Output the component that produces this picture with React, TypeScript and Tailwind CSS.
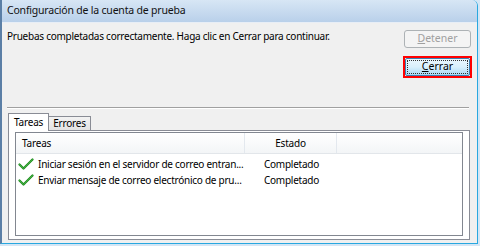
import React from "react";

function Check() {
  return (
    <svg width="16" height="12" viewBox="0 0 16 12" className="shrink-0">
      <path d="M1.5 6.5 L5.5 10.5 L14.5 1.5" fill="none" stroke="#1f8a1f" strokeWidth="2.2" strokeLinecap="round" strokeLinejoin="round" />
      <path d="M1.5 6.5 L5.5 10.5 L14.5 1.5" fill="none" stroke="#48be48" strokeWidth="0.8" strokeLinecap="round" strokeLinejoin="round" />
    </svg>
  );
}

export default function App() {
  const rows = [
    "Iniciar sesión en el servidor de correo entran...",
    "Enviar mensaje de correo electrónico de pru...",
  ];
  return (
    <div className="w-[480px] h-[246px] overflow-hidden bg-[#d4e6f5] font-['Noto_Sans',sans-serif] text-black">
      <div className="h-[244px] w-[478px] flex flex-col border-l-2 border-l-[#5b7fa6] border-r border-r-[#29a8e0] border-b border-b-[#29a8e0] rounded-tr-[6px] overflow-hidden">
        <div className="h-[23px] shrink-0 flex items-center pl-[5px] bg-gradient-to-b from-[#d7e6f5] to-[#b9d0ea] border-b border-b-[#e8eef6] text-[10.5px] tracking-[-0.2px] text-[#111]">
          Configuración de la cuenta de prueba
        </div>
        <div className="flex-1 flex flex-col bg-[#f0f0f0]">
          <div className="h-[84px] shrink-0 flex justify-between pl-[5px] pr-[5px] pt-[6px]">
            <div className="text-[10px] tracking-[-0.25px] leading-[14px]">
              Pruebas completadas correctamente. Haga clic en Cerrar para continuar.
            </div>
            <div className="flex flex-col items-center gap-[8px] pt-[1px]">
              <div className="w-[67px] h-[18px] rounded-[3px] border border-[#adb2b5] bg-[#f4f4f4] flex items-center justify-center text-[10.5px] text-[#a0a0a0]">
                <span><span className="underline">D</span>etener</span>
              </div>
              <div className="w-[69px] h-[22px] border-2 border-[#ff0000] flex">
                <div className="flex-1 rounded-[2px] border border-[#3c7fb1] bg-gradient-to-b from-[#eaf6fd] via-[#d9f0fc] to-[#a7d9f5] p-[1px] flex">
                  <div className="flex-1 border border-dotted border-[#333] flex items-center justify-center text-[10.5px]">
                    <span><span className="underline">C</span>errar</span>
                  </div>
                </div>
              </div>
            </div>
          </div>
          <div className="ml-[5px] h-[2px] shrink-0 border-t border-t-[#a0a0a0] border-b border-b-white mr-[8px]" />
          <div className="flex-1 flex flex-col pl-[6px] pr-[7px] pt-[4px] pb-[3px]">
            <div className="flex items-end h-[18px] relative z-10">
              <div className="h-[18px] px-[5px] bg-white border border-[#898c95] border-b-0 text-[10px] tracking-[-0.2px] flex items-center">Tareas</div>
              <div className="h-[15px] px-[4px] bg-gradient-to-b from-[#f2f2f2] to-[#e3e3e3] border border-[#898c95] border-l-0 text-[10px] tracking-[-0.2px] flex items-center">Errores</div>
            </div>
            <div className="flex-1 border border-[#898c95] bg-white -mt-[1px] pt-[1px] px-[6px] pb-[3px] flex">
              <div className="flex-1 border border-[#828790] bg-white flex flex-col">
                <div className="h-[21px] shrink-0 flex text-[10px] tracking-[-0.2px] bg-gradient-to-b from-white to-[#f3f5f7] border-b border-b-[#e2e6ea]">
                  <div className="w-[229px] pl-[6px] flex items-center border-r border-r-[#e3e8ee]">Tareas</div>
                  <div className="w-[92px] flex items-center justify-center border-r border-r-[#e3e8ee]">Estado</div>
                  <div className="flex-1" />
                </div>
                <div className="pt-[2px] flex flex-col">
                  {rows.map((r) => (
                    <div key={r} className="h-[16px] flex items-center text-[10px] tracking-[-0.25px]">
                      <div className="w-[229px] shrink-0 flex items-center pl-[2px] gap-[4px] whitespace-nowrap">
                        <Check />
                        <span>{r}</span>
                      </div>
                      <div className="pl-[19px]">Completado</div>
                    </div>
                  ))}
                </div>
              </div>
            </div>
          </div>
        </div>
      </div>
    </div>
  );
}
